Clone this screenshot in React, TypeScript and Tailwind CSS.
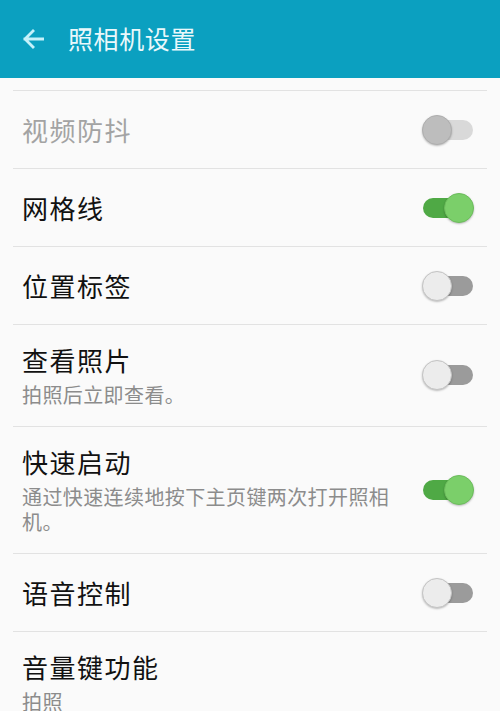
import React from "react";

type Row = {
  title: string;
  sub?: string;
  toggle?: "on" | "off" | "disabled";
  disabled?: boolean;
};

const rows: Row[] = [
  { title: "视频防抖", toggle: "disabled", disabled: true },
  { title: "网格线", toggle: "on" },
  { title: "位置标签", toggle: "off" },
  { title: "查看照片", sub: "拍照后立即查看。", toggle: "off" },
  { title: "快速启动", sub: "通过快速连续地按下主页键两次打开照相机。", toggle: "on" },
  { title: "语音控制", toggle: "off" },
  { title: "音量键功能", sub: "拍照" },
];

function Toggle({ state }: { state: "on" | "off" | "disabled" }) {
  if (state === "on") {
    return (
      <div className="relative w-[52px] h-[30px] flex items-center">
        <div className="w-[48px] h-[20px] ml-[1px] rounded-full bg-[#4fa945]" />
        <div className="absolute right-0 top-0 w-[30px] h-[30px] rounded-full bg-[#7bcf6a] border border-[#6cbd5c] shadow-[0_1px_2px_rgba(0,0,0,0.25)]" />
      </div>
    );
  }
  const track = state === "off" ? "bg-[#9b9b9b]" : "bg-[#d9d9d9]";
  const thumb =
    state === "off"
      ? "bg-[#ececec] border-[#c4c4c4]"
      : "bg-[#bdbdbd] border-[#aeaeae]";
  return (
    <div className="relative w-[52px] h-[30px] flex items-center">
      <div className={`w-[49px] h-[20px] ml-[2px] rounded-full ${track}`} />
      <div
        className={`absolute left-0 top-0 w-[30px] h-[30px] rounded-full border ${thumb} shadow-[0_1px_2px_rgba(0,0,0,0.25)]`}
      />
    </div>
  );
}

export default function App() {
  return (
    <div
      className="w-[500px] h-[711px] overflow-hidden bg-[#fafafa]"
      style={{ fontFamily: '"Noto Sans CJK SC", "Noto Sans", sans-serif' }}
    >
      {/* Header */}
      <header className="h-[78px] bg-[#0ba0c0] flex items-center pl-[22px]">
        <svg width="22" height="20" viewBox="0 0 22 20" fill="none">
          <path
            d="M21 10H3M11 2L3 10l8 8"
            stroke="#c6f1fa"
            strokeWidth="2.8"
            strokeLinecap="square"
          />
        </svg>
        <h1 className="ml-[24px] text-[25px] tracking-[0.6px] text-[#eaf8fb] font-normal">
          照相机设置
        </h1>
      </header>

      {/* List */}
      <div className="pt-[12px]">
        {rows.map((row) => (
          <div key={row.title}>
            <div className="mx-[13px] h-px bg-[#e2e2e2]" />
            <div
              className={`flex items-center justify-between pl-[22px] pr-[26px] ${
                row.sub ? "pt-[18px] pb-[19px]" : "min-h-[77px]"
              }`}
            >
              <div className="w-[372px]">
                <div
                  className={`text-[26px] leading-[34px] tracking-[1.5px] ${
                    row.disabled ? "text-[#a3a3a3]" : "text-[#111111]"
                  }`}
                >
                  {row.title}
                </div>
                {row.sub && (
                  <div className="mt-[5px] text-[20px] leading-[25px] tracking-[0.4px] text-[#8c8c8c]">
                    {row.sub}
                  </div>
                )}
              </div>
              {row.toggle && <Toggle state={row.toggle} />}
            </div>
          </div>
        ))}
      </div>
    </div>
  );
}
